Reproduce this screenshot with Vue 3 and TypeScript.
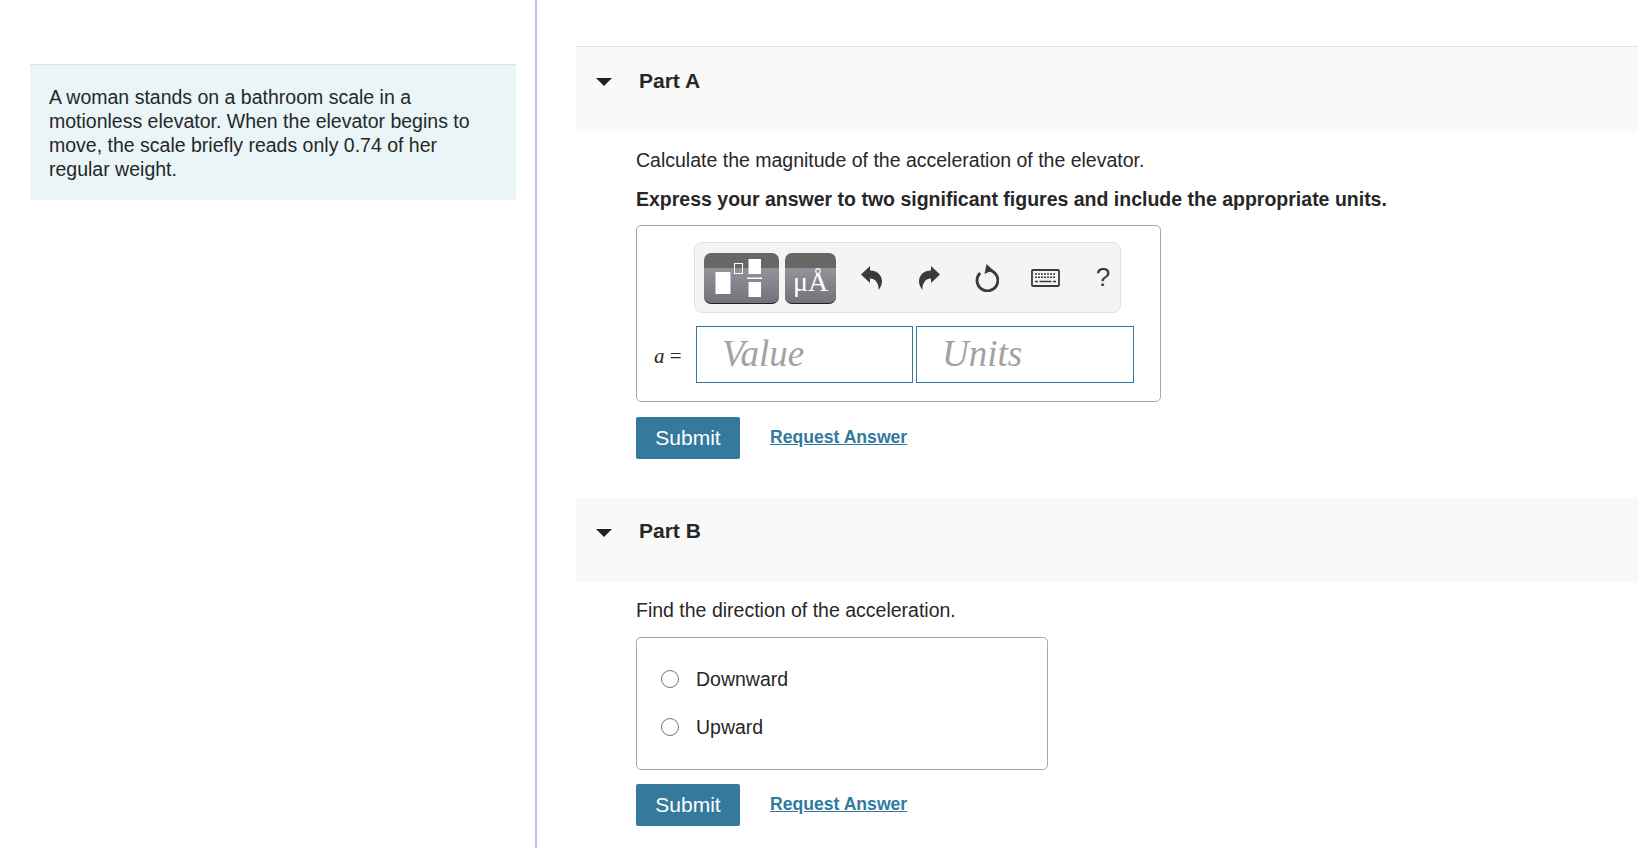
<script setup lang="ts">
const options = ['Downward', 'Upward'];
</script>

<template>
  <div class="page">
    <aside class="left">
      <div class="intro">
        A woman stands on a bathroom scale in a motionless elevator. When the elevator begins to move, the scale briefly reads only 0.74 of her regular weight.
      </div>
    </aside>
    <main class="right">
      <section class="part part-a">
        <header class="part-head">
          <span class="caret"></span>
          <h2>Part A</h2>
        </header>
        <div class="part-body">
          <p class="question">Calculate the magnitude of the acceleration of the elevator.</p>
          <p class="instr">Express your answer to two significant figures and include the appropriate units.</p>
          <div class="answer-box">
            <div class="toolbar">
              <button class="tpl tpl-wide" type="button" aria-label="Templates">
                <svg width="75" height="50" viewBox="0 0 75 50">
                  <rect x="11.500" y="19" width="15" height="22" fill="#fff" />
                  <rect x="30.500" y="10.500" width="8" height="10" fill="none" stroke="#fff" />
                  <rect x="44.500" y="6" width="12.500" height="15" fill="#fff" />
                  <rect x="43" y="24.500" width="15" height="1.500" fill="#fff" />
                  <rect x="44.500" y="29" width="12.500" height="15" fill="#fff" />
                </svg>
              </button>
              <button class="tpl tpl-units" type="button">
                <span class="mu">μÅ</span>
              </button>
              <span class="tool tool-undo">
                <svg width="21" height="24" viewBox="0 0 21 24">
                  <path d="M0 8.500 9 0v4.500c7 0 12 4.500 12 11 0 3-1.500 6-3.500 8.500.5-5-2-11.500-8.500-11.500V17z" fill="#3a3a3a" />
                </svg>
              </span>
              <span class="tool tool-redo">
                <svg width="21" height="24" viewBox="0 0 21 24">
                  <path d="M21 8.500 12 0v4.500C5 4.500 0 9 0 15.500c0 3 1.500 6 3.500 8.500-.5-5 2-11.500 8.500-11.500V17z" fill="#3a3a3a" />
                </svg>
              </span>
              <span class="tool tool-reset">
                <svg width="24" height="28" viewBox="0 0 24 28">
                  <path d="M13 6A10.400 10.400 0 1 1 5.200 8.900" fill="none" stroke="#3a3a3a" stroke-width="2.800" />
                  <path d="M11.500 0 18 6l-8.500 4z" fill="#3a3a3a" />
                </svg>
              </span>
              <span class="tool tool-kbd">
                <svg width="29" height="18" viewBox="0 0 29 18">
                  <rect x="1" y="1" width="27" height="16" rx="1" fill="none" stroke="#3a3a3a" stroke-width="1.800" />
                  <path d="M4 5h21M4 8.200h21" stroke="#3a3a3a" stroke-width="1.500" stroke-dasharray="2 1" />
                  <path d="M4 12.500h3M8.500 12.500h12M22 12.500h3" stroke="#3a3a3a" stroke-width="1.500" />
                </svg>
              </span>
              <span class="tool tool-help">?</span>
            </div>
            <div class="input-row">
              <span class="var"><i>a</i> =</span>
              <div class="field field-value">Value</div>
              <div class="field field-units">Units</div>
            </div>
          </div>
          <div class="actions">
            <button class="submit" type="button">Submit</button>
            <a class="req" href="#">Request Answer</a>
          </div>
        </div>
      </section>

      <section class="part part-b">
        <header class="part-head">
          <span class="caret"></span>
          <h2>Part B</h2>
        </header>
        <div class="part-body">
          <p class="question">Find the direction of the acceleration.</p>
          <div class="choice-box">
            <label v-for="opt in options" :key="opt" class="choice">
              <span class="radio"></span>
              <span>{{ opt }}</span>
            </label>
          </div>
          <div class="actions">
            <button class="submit" type="button">Submit</button>
            <a class="req" href="#">Request Answer</a>
          </div>
        </div>
      </section>
    </main>
  </div>
</template>

<style>
html, body {
  margin: 0;
  background: #fff;
}
</style>

<style scoped>
.page {
  display: flex;
  width: 1650px;
  height: 848px;
  overflow: hidden;
  font-family: "Liberation Sans", Arial, sans-serif;
  font-size: 19.500px;
  color: #272727;
}

.left {
  box-sizing: border-box;
  width: 537px;
  padding: 64px 19px 0 30px;
  border-right: 2px solid #b8c7d9;
  flex-shrink: 0;
}

.intro {
  box-sizing: border-box;
  height: 136px;
  padding: 20px 40px 0 19px;
  background: #e9f5f7;
  border-top: 1px solid #d5e3e6;
  line-height: 24px;
}

.right {
  flex: 1;
  padding: 46px 12px 0 39px;
}

.part-head {
  display: flex;
  align-items: flex-start;
  box-sizing: border-box;
  height: 86px;
  background: #f9f9f9;
  border-top: 1px solid #e3e3e3;
  padding: 22px 0 0 20px;
}

.part-b .part-head {
  height: 84px;
  border-top: 0;
  padding-top: 21px;
}

.caret {
  width: 0;
  height: 0;
  margin-top: 9px;
  border-left: 8px solid transparent;
  border-right: 8px solid transparent;
  border-top: 8px solid #212121;
}

.part-b .caret {
  margin-top: 10px;
}

.part-head h2 {
  margin: 0 0 0 27px;
  font-size: 21px;
  line-height: 24px;
  font-weight: bold;
}

.part-body {
  padding: 16px 0 0 60px;
}

.question {
  margin: 0;
  line-height: 24px;
}

.instr {
  margin: 15px 0 0;
  line-height: 24px;
  font-weight: bold;
}

.answer-box {
  box-sizing: border-box;
  width: 525px;
  height: 177px;
  margin-top: 14px;
  padding: 16px 0 0 57px;
  border: 1px solid #a8a8a8;
  border-radius: 5px;
}

.toolbar {
  display: flex;
  align-items: center;
  box-sizing: border-box;
  width: 427px;
  height: 71px;
  padding-left: 9px;
  background: #f4f4f4;
  border: 1px solid #e2e2e2;
  border-radius: 8px;
}

.tpl {
  box-sizing: border-box;
  flex-shrink: 0;
  height: 51px;
  margin-top: 1px;
  padding: 0;
  border: 0;
  border-bottom: 1px solid #222;
  border-radius: 7px;
  background: linear-gradient(#676767 0, #676767 15px, #94939b 15px, #72727a 100%);
  color: #fff;
}

.tpl svg {
  display: block;
}

.tpl-wide {
  width: 75px;
}

.tpl-units {
  width: 51px;
  margin-left: 6px;
}

.mu {
  display: block;
  margin-top: 8px;
  font-family: "Liberation Serif", serif;
  font-size: 28px;
  line-height: 34px;
}

.tool {
  display: flex;
  flex-shrink: 0;
  justify-content: center;
  align-items: center;
  width: 58px;
  color: #3a3a3a;
}

.tool-undo {
  margin-left: 6px;
}

.tool-help {
  font-size: 26px;
  margin-top: -1px;
}

.input-row {
  display: flex;
  align-items: center;
  margin: 13px 0 0 -44px;
}

.var {
  width: 46px;
  margin-top: 3px;
  padding-left: 4px;
  box-sizing: border-box;
  font-family: "Liberation Serif", serif;
  font-size: 21px;
}

.field {
  box-sizing: border-box;
  height: 57px;
  padding-left: 25px;
  border: 1px solid #2f7a9e;
  font-family: "Liberation Serif", serif;
  font-style: italic;
  font-size: 37px;
  line-height: 54px;
  color: #a2a2a2;
}

.field-value {
  width: 217px;
}

.field-units {
  width: 218px;
  margin-left: 3px;
}

.actions {
  display: flex;
  align-items: center;
  margin-top: 15px;
}

.submit {
  width: 104px;
  height: 42px;
  padding: 0;
  border: 0;
  border-radius: 2px;
  background: #35799c;
  color: #fff;
  font-family: inherit;
  font-size: 21px;
}

.req {
  margin-top: -2px;
  margin-left: 30px;
  color: #2f7a9e;
  font-weight: bold;
  font-size: 17.600px;
}

.part-b {
  margin-top: 39px;
}

.choice-box {
  box-sizing: border-box;
  width: 412px;
  height: 133px;
  margin-top: 15px;
  padding-top: 17px;
  border: 1px solid #a8a8a8;
  border-radius: 5px;
}

.choice {
  display: flex;
  align-items: center;
  height: 48px;
  padding-left: 24px;
}

.radio {
  box-sizing: border-box;
  width: 18px;
  height: 18px;
  margin-right: 17px;
  border: 1.500px solid #767676;
  border-radius: 50%;
}

.part-b .actions {
  margin-top: 14px;
}
</style>
